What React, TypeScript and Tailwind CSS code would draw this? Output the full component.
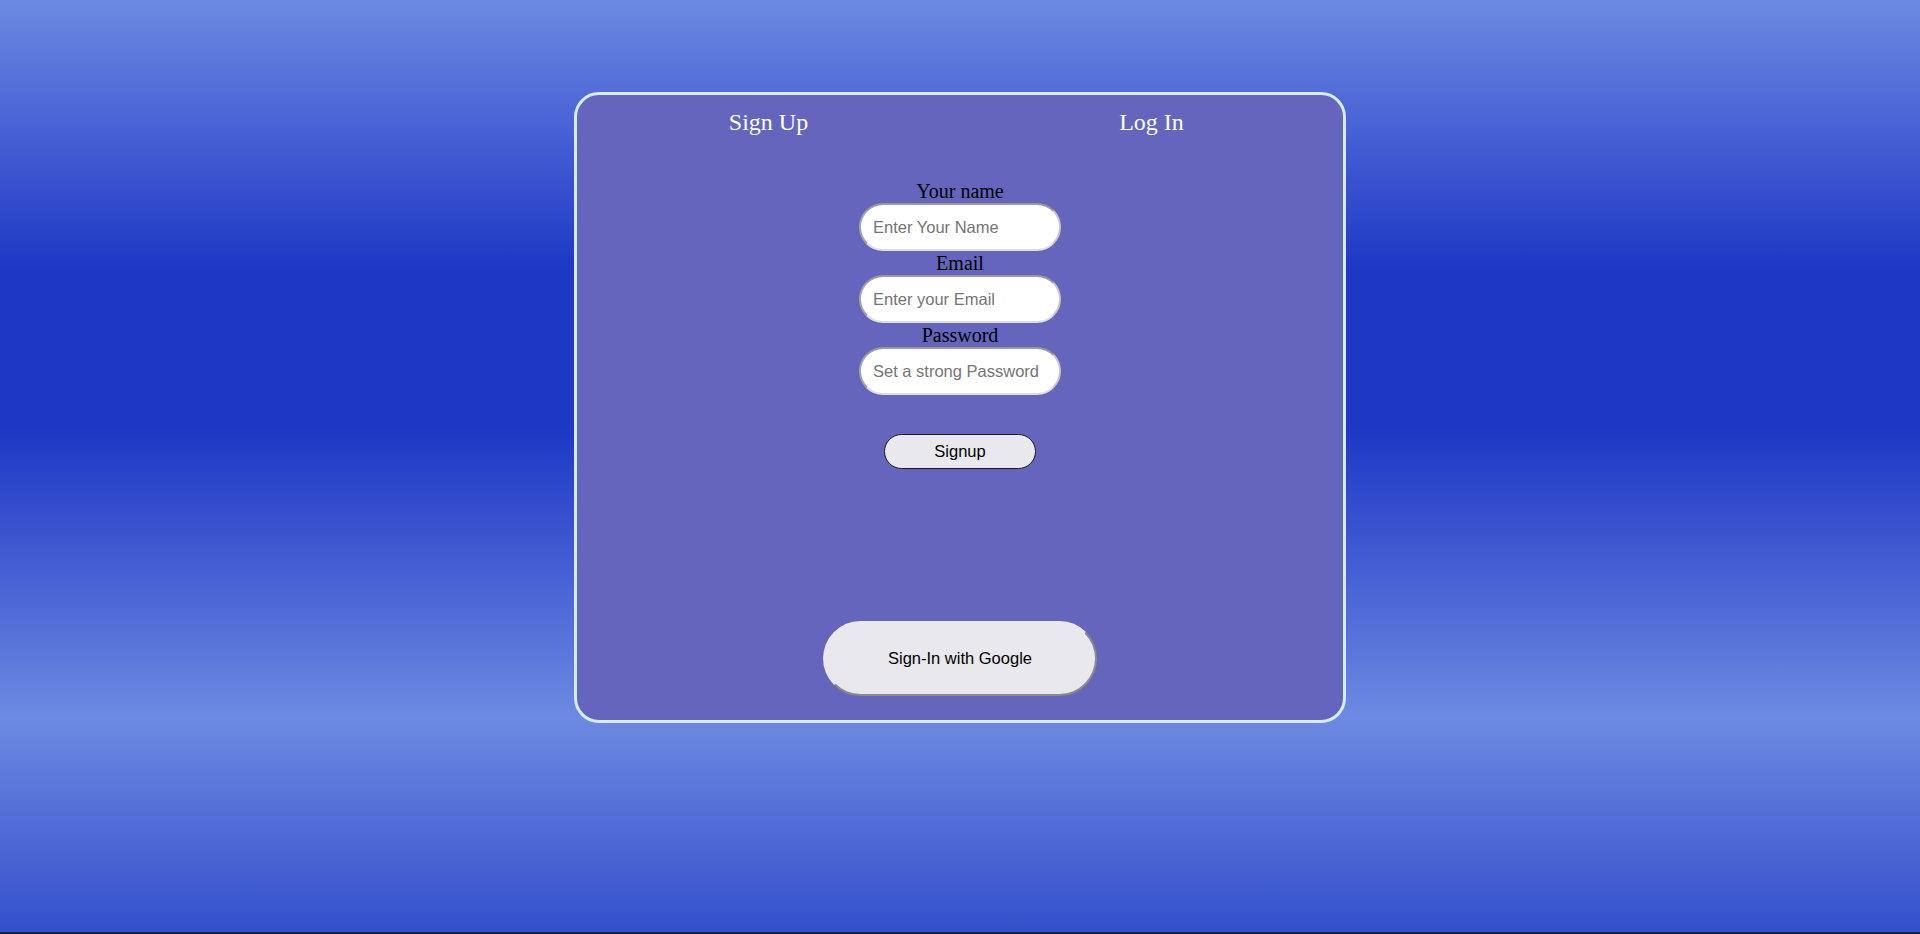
import React from "react";

const serif = "font-['Liberation_Serif','Times_New_Roman',serif]";
const sans = "font-['Liberation_Sans',Arial,sans-serif]";

interface FieldProps {
  label: string;
  placeholder: string;
  type?: string;
}

const Field: React.FC<FieldProps> = ({ label, placeholder, type = "text" }) => (
  <div className="flex flex-col items-center">
    <label className={`${serif} text-[20px] leading-[24px] text-black`}>{label}</label>
    <input
      type={type}
      placeholder={placeholder}
      className={`${sans} h-[48px] w-[202px] rounded-full border-2 border-t-[#9a9a9a] border-l-[#a5a5a5] border-r-[#c8c8c8] border-b-[#dedede] bg-white pl-[12px] text-[16.5px] text-black outline-none placeholder:text-[#757575]`}
    />
  </div>
);

export default function App() {
  return (
    <div className="h-[934px] w-full overflow-hidden bg-[#23232e]">
      <div className="h-[932px] w-full bg-[linear-gradient(to_bottom,#6d8ae2_0%,#1e37c5_29%,#1e37c5_46%,#6d8ae2_77%,#3450cc_100%)] pt-[92px]">
        {/* card */}
        <div className="mx-auto flex h-[631px] w-[772px] flex-col rounded-[25px] border-[3px] border-[#d4ecff] bg-[#6565bd]">
          <div className={`${serif} flex pt-[13px] text-[24px] leading-[28px] text-white`}>
            <div className="flex-1 text-center">Sign Up</div>
            <div className="flex-1 text-center">Log In</div>
          </div>

          <form className="mt-[43px] flex flex-col items-center" onSubmit={(e) => e.preventDefault()}>
            <Field label="Your name" placeholder="Enter Your Name" />
            <Field label="Email" placeholder="Enter your Email" type="email" />
            <Field label="Password" placeholder="Set a strong Password" type="password" />
            <button
              type="submit"
              className={`${sans} mt-[39px] h-[35px] w-[152px] rounded-full border border-[#1a1a1a] bg-[#e9e8ee] text-[16.5px] text-black`}
            >
              Signup
            </button>
          </form>

          <div className="mt-auto flex justify-center pb-[24px]">
            <button
              className={`${sans} h-[75px] w-[274px] rounded-full border-2 border-t-[#e9e8ed] border-l-[#e9e8ed] border-r-[#8c8c8c] border-b-[#8c8c8c] bg-[#e9e8ed] text-[16.5px] text-black`}
            >
              Sign-In with Google
            </button>
          </div>
        </div>
      </div>
    </div>
  );
}
